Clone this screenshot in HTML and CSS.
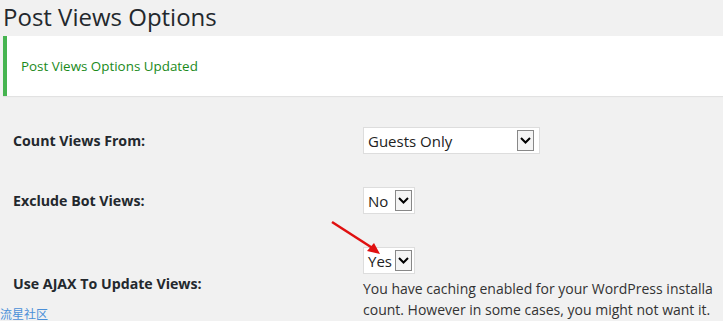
FILE: index.html
```html
<!DOCTYPE html>
<html lang="en">
<head>
    <meta charset="UTF-8">
    <meta name="viewport" content="width=device-width, initial-scale=1.0">
    <title>Post Views Options</title>
    <link rel="stylesheet" href="styles.css">
</head>
<body>
    <div class="wrap">
        <h1>Post Views Options</h1>
        <div class="notice">
            <p>Post Views Options Updated</p>
        </div>
        <div class="form-table">
            <div class="form-row">
                <div class="label">Count Views From:</div>
                <div class="field">
                    <span class="select select-wide">
                        <span class="select-text">Guests Only</span>
                        <span class="select-btn"><svg width="11" height="7" viewBox="0 0 11 7"><path d="M1 1l4.5 4.5L10 1" fill="none" stroke="#000" stroke-width="2"/></svg></span>
                    </span>
                </div>
            </div>
            <div class="form-row">
                <div class="label">Exclude Bot Views:</div>
                <div class="field">
                    <span class="select">
                        <span class="select-text">No</span>
                        <span class="select-btn"><svg width="11" height="7" viewBox="0 0 11 7"><path d="M1 1l4.5 4.5L10 1" fill="none" stroke="#000" stroke-width="2"/></svg></span>
                    </span>
                </div>
            </div>
            <div class="form-row">
                <div class="label">Use AJAX To Update Views:</div>
                <div class="field">
                    <span class="select">
                        <span class="select-text">Yes</span>
                        <span class="select-btn"><svg width="11" height="7" viewBox="0 0 11 7"><path d="M1 1l4.5 4.5L10 1" fill="none" stroke="#000" stroke-width="2"/></svg></span>
                    </span>
                    <p class="description">You have caching enabled for your WordPress installa<br>count. However in some cases, you might not want it.</p>
                </div>
            </div>
        </div>
        <!-- annotation arrow drawn over the screenshot -->
        <svg class="pointer" width="60" height="40" viewBox="0 0 60 40">
            <path d="M2 2L44 29" stroke="#e01010" stroke-width="2.5" fill="none"/>
            <path d="M50 34L37 31L44 23Z" fill="#e01010"/>
        </svg>
    </div>
    <div class="watermark">流星社区</div>
</body>
</html>
```

FILE: styles.css
```css
body {
    margin: 0;
    background: #f1f1f1;
    font-family: "Open Sans", "Noto Sans", sans-serif;
    color: #23282d;
}
.wrap {
    position: relative;
    padding-left: 3px;
}
h1 {
    margin: 0;
    padding-top: 2px;
    font-size: 24px;
    font-weight: 400;
    line-height: 29px;
}
.notice {
    margin-top: 5px;
    background: #fff;
    border-left: 4px solid #46b450;
    box-shadow: 0 1px 1px rgba(0, 0, 0, 0.06);
    height: 60px;
    display: flex;
    align-items: center;
}
.notice p {
    margin: 0 0 0 14px;
    font-size: 13.4px;
    color: #1a8a1a;
}
.form-table {
    margin-top: 16px;
}
.form-row {
    display: grid;
    grid-template-columns: 360px 1fr;
    align-items: center;
    padding: 15px 0 0;
}
.form-row + .form-row {
    padding-top: 33px;
}
.label {
    padding-left: 10px;
    font-weight: 700;
    font-size: 14.2px;
}
.field {
    min-width: 0;
}
.select {
    display: inline-flex;
    align-items: center;
    height: 27px;
    box-sizing: border-box;
    width: 52px;
    background: #fff;
    border: 1px solid #ddd;
    padding: 0 2px 0 4px;
    font-size: 15px;
    color: #222;
}
.select-wide {
    width: 177px;
    padding-right: 5px;
}
.select-text {
    flex: 1;
}
.select-btn {
    width: 17px;
    height: 21px;
    box-sizing: border-box;
    border: 1px solid #888;
    background: #f4f4f4;
    display: flex;
    align-items: center;
    justify-content: center;
}
.description {
    margin: 4px 0 0;
    font-size: 14px;
    line-height: 21px;
    color: #333;
}
.pointer {
    position: absolute;
    left: 330px;
    top: 220px;
}
.watermark {
    position: absolute;
    left: 0;
    bottom: 0;
    font-family: "Noto Sans CJK SC", sans-serif;
    font-size: 12px;
    line-height: 14px;
    color: #4a8fd8;
}
```
